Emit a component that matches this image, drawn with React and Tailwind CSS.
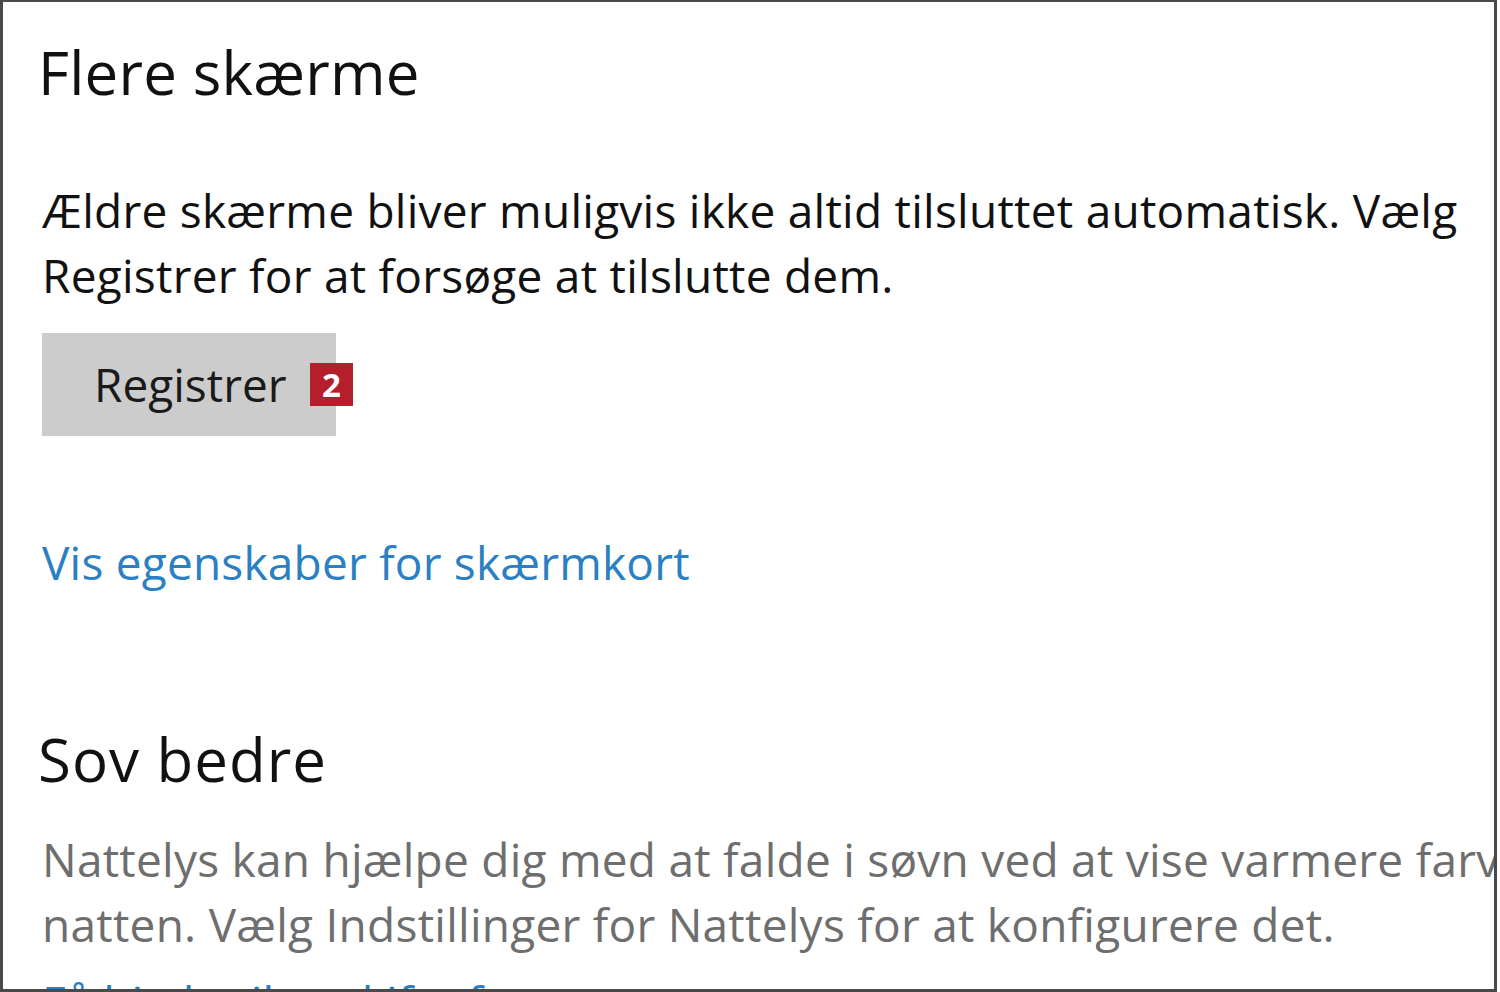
import React from 'react';

const font = { fontFamily: '"Open Sans", "Noto Sans", sans-serif' };

export default function App() {
  return (
    <div className="w-[1500px] h-[992px] bg-white overflow-hidden" style={font}>
      <div className="w-[1497px] h-[992px] border-l-[3px] border-t-[2px] border-r-[3px] border-b-[3px] border-[#4a4a4a] bg-white overflow-hidden">
        <div className="pl-[35px] pt-[32px]">
          <h1 className="text-[60px] leading-[76px] text-[#111] tracking-[0.2px] whitespace-nowrap">Flere skærme</h1>

          <p className="mt-[68px] pl-[4px] text-[46px] leading-[65px] text-[#111] tracking-[0.25px] whitespace-nowrap">
            Ældre skærme bliver muligvis ikke altid tilsluttet automatisk. Vælg
            <br />
            Registrer for at forsøge at tilslutte dem.
          </p>

          <div className="mt-[25px] ml-[4px] flex items-start">
            <button className="w-[294px] h-[103px] bg-[#cccccc] flex items-center pl-[52px] text-[46px] text-[#1a1a1a]">
              <span>Registrer</span>
            </button>
            <span className="-ml-[26px] mt-[30px] w-[43px] h-[43px] bg-[#b51e2b] text-white font-bold text-[33px] leading-[43px] flex items-center justify-center">2</span>
          </div>

          <a className="block mt-[96px] ml-[4px] text-[46px] leading-[60px] text-[#2b7fc3] tracking-[0.2px] whitespace-nowrap">Vis egenskaber for skærmkort</a>

          <h2 className="mt-[129px] text-[60px] leading-[76px] text-[#111] tracking-[1px] whitespace-nowrap">Sov bedre</h2>

          <p className="mt-[30px] pl-[4px] text-[46px] leading-[65px] text-[#6e6e6e] tracking-[0.25px] whitespace-nowrap">
            Nattelys kan hjælpe dig med at falde i søvn ved at vise varmere farver om
            <br />
            natten. Vælg Indstillinger for Nattelys for at konfigurere det.
          </p>

          <a className="block mt-[15px] ml-[4px] text-[46px] leading-[60px] text-[#2b7fc3] whitespace-nowrap">Få hjælp til at skifte farver</a>
        </div>
      </div>
    </div>
  );
}
